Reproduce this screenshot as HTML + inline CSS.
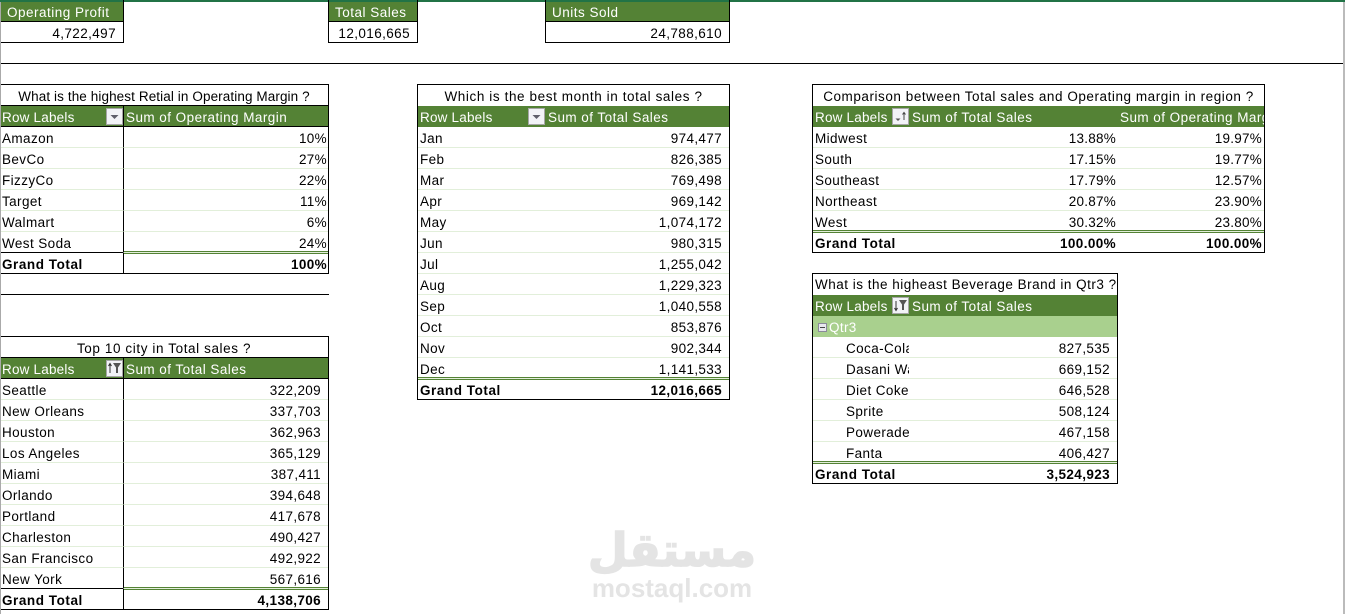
<!DOCTYPE html>
<html lang="en">
<head>
<meta charset="utf-8">
<title>Pivot Dashboard</title>
<style>
html,body{margin:0;padding:0;background:#fff}
body{position:relative;width:1345px;height:614px;overflow:hidden;font:13.5px/16px "Liberation Sans",sans-serif;color:#000}
.a{position:absolute}
table{position:absolute;border-collapse:separate;border-spacing:0;table-layout:fixed;border-top:1px solid #000;border-right:1px solid #000;border-bottom:1px solid #000;border-left:1px solid #000}
table.nl{border-left:0}
td{box-sizing:border-box;height:21px;padding:4px 2px 0;border-bottom:1px solid #e2efda;overflow:hidden;white-space:nowrap;line-height:16px;letter-spacing:.4px;vertical-align:top}
.nl td:first-child{padding-left:1px}
.r{text-align:right;letter-spacing:.25px}
.n td:last-child{text-align:right;letter-spacing:.35px}
.n td.ti{text-align:center;border-bottom:0}
td.ti{text-align:center;border-bottom:0}
.h td{background:#548235;color:#fff;border-bottom:0;letter-spacing:.45px!important}
.h td:first-child{letter-spacing:.2px!important}
.sub td{background:#a9d08e;color:#fff;border-bottom:0}
.tot td{font-weight:bold;border-bottom:0;height:20px;letter-spacing:.38px!important}
.tot td:first-child{letter-spacing:.55px!important}
.i1 td:first-child{border-right:1px solid #000}
.bb td{border-bottom:1px solid #000}
.gl{position:absolute;height:1px;border-top:1px solid #548235;border-bottom:1px solid #548235}
.card{position:absolute;box-sizing:border-box;height:43px;top:0;padding-top:2px;border-right:1px solid #000;border-bottom:1px solid #000}
.card div{padding:3px 0 0 6px;height:16px;line-height:16px;background:#548235;color:#fff;border-bottom:1px solid #000;letter-spacing:.5px}
.card p{margin:0;padding-top:4px;height:16px;line-height:16px;text-align:right;letter-spacing:.4px}
.btn{position:absolute;width:17px;height:17px}
.in td:first-child{padding-left:33px}
.clip{display:block;overflow:hidden;width:63px}
</style>
</head>
<body>

<!-- Window chrome lines -->
<div class="a" style="left:0;top:0;width:1345px;height:2px;background:#217346"></div>
<div class="a" style="left:0;top:2px;width:1px;height:612px;background:#aaa"></div>
<div class="a" style="left:1343px;top:2px;width:2px;height:612px;background:#bbb"></div>

<!-- KPI cards -->
<div class="card" style="left:1px;width:123px"><div>Operating Profit</div><p style="padding-right:7px">4,722,497</p></div>
<div class="card" style="left:328px;width:90px;border-left:1px solid #000"><div>Total Sales</div><p style="padding-right:7px">12,016,665</p></div>
<div class="card" style="left:545px;width:185px;border-left:1px solid #000"><div>Units Sold</div><p style="padding-right:7px">24,788,610</p></div>

<!-- Rules -->
<div class="a" style="left:1px;top:63px;width:1342px;height:1px;background:#000"></div>
<div class="a" style="left:1px;top:294px;width:328px;height:1px;background:#000"></div>

<!-- Table 1 -->
<table class="nl n i1" style="left:1px;top:84px;width:328px">
<col style="width:123px"><col style="width:204px">
<tr><td colspan="2" class="ti" style="border-bottom:1px solid #000;border-right:0;letter-spacing:.1px">What is the highest Retial in Operating Margin ?</td></tr>
<tr class="h bb"><td>Row Labels</td><td style="text-align:left">Sum of Operating Margin</td></tr>
<tr><td>Amazon</td><td style="padding-right:1px">10%</td></tr>
<tr><td>BevCo</td><td style="padding-right:1px">27%</td></tr>
<tr><td>FizzyCo</td><td style="padding-right:1px">22%</td></tr>
<tr><td>Target</td><td style="padding-right:1px">11%</td></tr>
<tr><td>Walmart</td><td style="padding-right:1px">6%</td></tr>
<tr><td>West Soda</td><td style="padding-right:1px">24%</td></tr>
<tr class="tot"><td>Grand Total</td><td style="padding-right:1px">100%</td></tr>
</table>
<div class="a" style="left:1px;top:252px;width:122px;height:1px;background:#000"></div>
<div class="gl" style="left:124px;top:251px;width:204px"></div>

<!-- Table 2 -->
<table class="n" style="left:417px;top:84px;width:313px">
<col style="width:128px"><col style="width:183px">
<tr><td colspan="2" class="ti" style="letter-spacing:.6px">Which is the best month in total sales ?</td></tr>
<tr class="h"><td>Row Labels</td><td style="text-align:left">Sum of Total Sales</td></tr>
<tr><td>Jan</td><td style="padding-right:7px">974,477</td></tr>
<tr><td>Feb</td><td style="padding-right:7px">826,385</td></tr>
<tr><td>Mar</td><td style="padding-right:7px">769,498</td></tr>
<tr><td>Apr</td><td style="padding-right:7px">969,142</td></tr>
<tr><td>May</td><td style="padding-right:7px">1,074,172</td></tr>
<tr><td>Jun</td><td style="padding-right:7px">980,315</td></tr>
<tr><td>Jul</td><td style="padding-right:7px">1,255,042</td></tr>
<tr><td>Aug</td><td style="padding-right:7px">1,229,323</td></tr>
<tr><td>Sep</td><td style="padding-right:7px">1,040,558</td></tr>
<tr><td>Oct</td><td style="padding-right:7px">853,876</td></tr>
<tr><td>Nov</td><td style="padding-right:7px">902,344</td></tr>
<tr><td>Dec</td><td style="padding-right:7px">1,141,533</td></tr>
<tr class="tot"><td>Grand Total</td><td style="padding-right:7px">12,016,665</td></tr>
</table>
<div class="gl" style="left:418px;top:377px;width:311px"></div>

<!-- Table 3 -->
<table style="left:812px;top:84px;width:453px">
<col style="width:98px"><col style="width:207px"><col style="width:146px">
<tr><td colspan="3" class="ti" style="letter-spacing:.55px">Comparison between Total sales and Operating margin in region ?</td></tr>
<tr class="h"><td>Row Labels</td><td style="padding-left:1px">Sum of Total Sales</td><td style="padding-left:2px;padding-right:0">Sum of Operating Margin</td></tr>
<tr><td>Midwest</td><td class="r">13.88%</td><td class="r">19.97%</td></tr>
<tr><td>South</td><td class="r">17.15%</td><td class="r">19.77%</td></tr>
<tr><td>Southeast</td><td class="r">17.79%</td><td class="r">12.57%</td></tr>
<tr><td>Northeast</td><td class="r">20.87%</td><td class="r">23.90%</td></tr>
<tr><td>West</td><td class="r">30.32%</td><td class="r">23.80%</td></tr>
<tr class="tot"><td>Grand Total</td><td class="r">100.00%</td><td class="r">100.00%</td></tr>
</table>
<div class="gl" style="left:813px;top:230px;width:451px"></div>

<!-- Table 4 -->
<table class="n in" style="left:812px;top:273px;width:306px">
<col style="width:98px"><col style="width:206px">
<tr><td colspan="2" style="padding:3px 0 0 2px;border-bottom:0;text-align:left;letter-spacing:.5px">What is the higheast Beverage Brand in Qtr3 ?</td></tr>
<tr class="h"><td style="padding-left:2px">Row Labels</td><td style="text-align:left;padding-left:1px">Sum of Total Sales</td></tr>
<tr class="sub"><td colspan="2" style="text-align:left;padding-left:16px">Qtr3</td></tr>
<tr><td><span class="clip">Coca-Cola</span></td><td style="padding-right:7px">827,535</td></tr>
<tr><td><span class="clip">Dasani Water</span></td><td style="padding-right:7px">669,152</td></tr>
<tr><td><span class="clip">Diet Coke</span></td><td style="padding-right:7px">646,528</td></tr>
<tr><td>Sprite</td><td style="padding-right:7px">508,124</td></tr>
<tr><td>Powerade</td><td style="padding-right:7px">467,158</td></tr>
<tr><td>Fanta</td><td style="padding-right:7px">406,427</td></tr>
<tr class="tot"><td style="padding-left:2px">Grand Total</td><td style="padding-right:7px">3,524,923</td></tr>
</table>
<div class="gl" style="left:813px;top:461px;width:304px"></div>
<svg class="a" style="left:818px;top:323px" width="9" height="9"><rect x=".5" y=".5" width="8" height="8" fill="#e8e8ee" stroke="#8a8a9a"/><path d="M2 4.500h5" stroke="#444" stroke-width="1"/></svg>

<!-- Table 5 -->
<table class="nl n i1" style="left:1px;top:336px;width:328px">
<col style="width:123px"><col style="width:204px">
<tr><td colspan="2" class="ti" style="border-bottom:1px solid #000;border-right:0;letter-spacing:.6px">Top 10 city in Total sales ?</td></tr>
<tr class="h bb"><td>Row Labels</td><td style="text-align:left">Sum of Total Sales</td></tr>
<tr><td>Seattle</td><td style="padding-right:7px">322,209</td></tr>
<tr><td>New Orleans</td><td style="padding-right:7px">337,703</td></tr>
<tr><td>Houston</td><td style="padding-right:7px">362,963</td></tr>
<tr><td>Los Angeles</td><td style="padding-right:7px">365,129</td></tr>
<tr><td>Miami</td><td style="padding-right:7px">387,411</td></tr>
<tr><td>Orlando</td><td style="padding-right:7px">394,648</td></tr>
<tr><td>Portland</td><td style="padding-right:7px">417,678</td></tr>
<tr><td>Charleston</td><td style="padding-right:7px">490,427</td></tr>
<tr><td>San Francisco</td><td style="padding-right:7px">492,922</td></tr>
<tr><td>New York</td><td style="padding-right:7px">567,616</td></tr>
<tr class="tot"><td>Grand Total</td><td style="padding-right:7px">4,138,706</td></tr>
</table>
<div class="a" style="left:1px;top:588px;width:122px;height:1px;background:#000"></div>
<div class="gl" style="left:124px;top:587px;width:204px"></div>

<!-- Pivot buttons -->
<svg class="btn" style="left:106px;top:108px" viewBox="0 0 17 17"><rect x=".5" y=".5" width="16" height="16" fill="#f2f3f7" stroke="#a6a6a6"/><path d="M4.500 7h8l-4 4z" fill="#5f5f6b"/></svg>
<svg class="btn" style="left:528px;top:108px" viewBox="0 0 17 17"><rect x=".5" y=".5" width="16" height="16" fill="#f2f3f7" stroke="#a6a6a6"/><path d="M4.500 7h8l-4 4z" fill="#5f5f6b"/></svg>
<svg class="btn" style="left:892px;top:108px" viewBox="0 0 17 17"><rect x=".5" y=".5" width="16" height="16" fill="#f2f3f7" stroke="#a6a6a6"/><path d="M3.500 10.500h5l-2.500 2.500z" fill="#555"/><path d="M12 12V4.500M10.500 6.500l1.500-2 1.500 2" fill="none" stroke="#444"/></svg>
<svg class="btn" style="left:892px;top:297px" viewBox="0 0 17 17"><rect x=".5" y=".5" width="16" height="16" fill="#f2f3f7" stroke="#a6a6a6"/><path d="M4 4v9M2.500 11L4 13.500 5.500 11" fill="none" stroke="#333"/><path d="M7 3h8l-3 4.500V13H10V7.500z" fill="#555"/></svg>
<svg class="btn" style="left:106px;top:360px" viewBox="0 0 17 17"><rect x=".5" y=".5" width="16" height="16" fill="#f2f3f7" stroke="#a6a6a6"/><path d="M4 13V4M2.500 6L4 3.500 5.500 6" fill="none" stroke="#333"/><path d="M7 3h8l-3 4.500V13H10V7.500z" fill="#555"/></svg>

<!-- Watermark -->
<div class="a" dir="rtl" lang="ar" style="left:572px;top:519px;width:200px;text-align:center;color:#e4e4e4;font:bold 46px/62px 'DejaVu Sans',sans-serif;-webkit-text-stroke:1.5px #e4e4e4">مستقل</div>
<div class="a" style="left:572px;top:575px;width:200px;text-align:center;color:#e4e4e4;font:bold 26px/26px 'Liberation Sans',sans-serif">mostaql.com</div>

</body>
</html>
